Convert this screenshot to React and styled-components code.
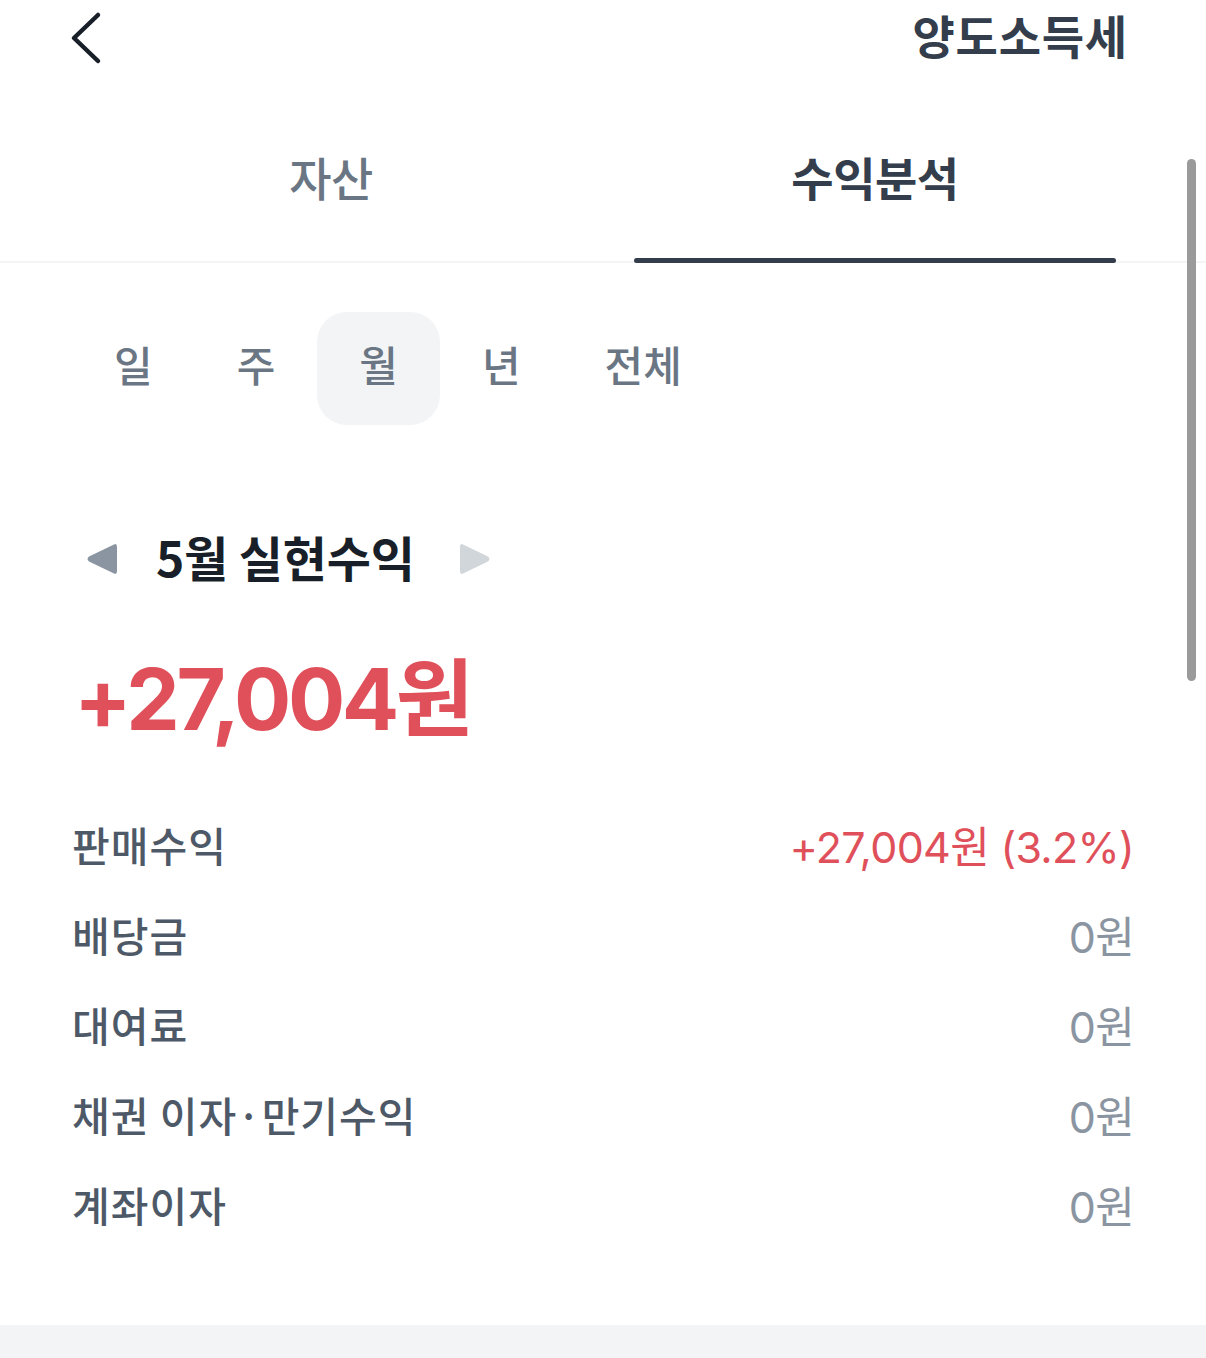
import React, { useState } from "react";
import styled, { createGlobalStyle } from "styled-components";

const GlobalStyle = createGlobalStyle`
  html, body { margin: 0; padding: 0; background: #ffffff; }
  body {
    font-family: "Noto Sans CJK KR", "Noto Sans", "Liberation Sans", sans-serif;
    -webkit-font-smoothing: antialiased;
  }
  * { box-sizing: border-box; }
`;

const Page = styled.div`
  position: relative;
  width: 1206px;
  height: 1358px;
  overflow: hidden;
  background: #ffffff;
  display: flex;
  flex-direction: column;
`;

const Header = styled.header`
  height: 74px;
  display: flex;
  align-items: center;
  justify-content: space-between;
  padding: 0 78px 0 66px;
`;

const BackButton = styled.button`
  border: 0;
  background: none;
  padding: 0;
  width: 40px;
  height: 56px;
  display: flex;
  align-items: center;
  justify-content: center;
  margin-top: 2px;
`;

const Title = styled.h1`
  margin: 0;
  font-size: 46px;
  line-height: 60px;
  font-weight: 700;
  color: #333d4b;
  letter-spacing: 0.8px;
  margin-top: -6px;
`;

const TabBar = styled.nav`
  display: flex;
  gap: 62px;
  padding: 0 90px;
  border-bottom: 2px solid #f2f4f6;
  height: 189px;
`;

const Tab = styled.button`
  position: relative;
  flex: 0 0 482px;
  display: flex;
  align-items: flex-start;
  justify-content: center;
  border: 0;
  background: none;
  padding: 72px 0 0;
  font-family: inherit;
  font-size: 46px;
  line-height: 60px;
  letter-spacing: -0.5px;
  font-weight: ${(p) => (p.$active ? 700 : 500)};
  color: ${(p) => (p.$active ? "#333d4b" : "#6b7684")};
  align-self: stretch;
  &::after {
    content: "";
    display: ${(p) => (p.$active ? "block" : "none")};
    position: absolute;
    left: 0;
    right: 0;
    bottom: -2px;
    height: 5px;
    border-radius: 3px;
    background: #333d4b;
  }
`;

const Segments = styled.div`
  display: flex;
  padding: 0 0 0 72px;
  margin-top: 49px;
`;

const Segment = styled.button`
  height: 113px;
  padding: 0 42px 10px;
  border: 0;
  border-radius: 30px;
  background: ${(p) => (p.$active ? "#f2f4f6" : "transparent")};
  font-family: inherit;
  font-size: 42px;
  font-weight: 500;
  color: #6b7684;
  letter-spacing: 0;
  display: flex;
  align-items: center;
  justify-content: center;
  min-width: 122px;
`;

const MonthRow = styled.div`
  display: flex;
  align-items: center;
  margin-top: 104px;
  padding-left: 84px;
  height: 60px;
`;

const Arrow = styled.button`
  border: 0;
  background: none;
  padding: 0;
  width: 36px;
  height: 40px;
  display: flex;
  align-items: center;
  justify-content: center;
`;

const MonthTitle = styled.h2`
  margin: -6px 42px 0 36px;
  font-size: 48px;
  line-height: 60px;
  font-weight: 700;
  color: #191f28;
  letter-spacing: -0.2px;
`;

const Amount = styled.div`
  margin-top: 56px;
  padding-left: 74px;
  font-family: "Inter", "Noto Sans CJK KR", sans-serif;
  font-size: 85px;
  line-height: 110px;
  font-weight: 700;
  letter-spacing: -3.5px;
  color: #e0505a;
`;

const List = styled.ul`
  list-style: none;
  margin: 44px 0 0;
  padding: 0 72px 0 72px;
`;

const Row = styled.li`
  height: 90px;
  display: flex;
  align-items: center;
  justify-content: space-between;
`;

const Label = styled.span`
  font-size: 41px;
  font-weight: 500;
  color: #4e5968;
  letter-spacing: 1px;
`;

const Value = styled.span`
  font-family: "Inter", "Noto Sans CJK KR", sans-serif;
  font-size: 43px;
  font-weight: 400;
  letter-spacing: -0.7px;
  color: ${(p) => (p.$positive ? "#e0505a" : "#8b95a1")};
`;

const Spacer = styled.div`
  flex: 1;
`;

const BottomBand = styled.div`
  height: 33px;
  background: #f2f4f6;
`;

const ScrollThumb = styled.div`
  position: absolute;
  right: 10px;
  top: 159px;
  width: 9px;
  height: 522px;
  border-radius: 5px;
  background: #9a9a9a;
`;

const rows = [
  { label: "판매수익", value: "+27,004원 (3.2%)", positive: true },
  { label: "배당금", value: "0원" },
  { label: "대여료", value: "0원" },
  { label: "채권 이자·만기수익", value: "0원" },
  { label: "계좌이자", value: "0원" },
];

const periods = ["일", "주", "월", "년", "전체"];

export default function App() {
  const [period, setPeriod] = useState("월");
  const [tab, setTab] = useState(1);
  return (
    <Page>
      <GlobalStyle />
      <Header>
        <BackButton aria-label="뒤로">
          <svg width="36" height="56" viewBox="0 0 36 56">
            <path
              d="M30 5 L6 28 L30 51"
              fill="none"
              stroke="#191f28"
              strokeWidth="4.5"
              strokeLinecap="round"
              strokeLinejoin="round"
            />
          </svg>
        </BackButton>
        <Title>양도소득세</Title>
      </Header>
      <TabBar>
        <Tab $active={tab === 0} onClick={() => setTab(0)}>자산</Tab>
        <Tab $active={tab === 1} onClick={() => setTab(1)}>수익분석</Tab>
      </TabBar>
      <Segments>
        {periods.map((p) => (
          <Segment key={p} $active={p === period} onClick={() => setPeriod(p)}>
            {p}
          </Segment>
        ))}
      </Segments>
      <MonthRow>
        <Arrow aria-label="이전 달">
          <svg width="34" height="36" viewBox="0 0 34 36">
            <path
              d="M29 3.5 Q32 2 32 6 L32 30 Q32 34 29 32.5 L4 20.5 Q1 18 4 15.5 Z"
              fill="#8b95a1"
            />
          </svg>
        </Arrow>
        <MonthTitle>5월 실현수익</MonthTitle>
        <Arrow aria-label="다음 달">
          <svg width="34" height="36" viewBox="0 0 34 36">
            <path
              d="M5 3.5 Q2 2 2 6 L2 30 Q2 34 5 32.5 L30 20.5 Q33 18 30 15.5 Z"
              fill="#d1d6db"
            />
          </svg>
        </Arrow>
      </MonthRow>
      <Amount>+27,004원</Amount>
      <List>
        {rows.map((r) => (
          <Row key={r.label}>
            <Label>{r.label}</Label>
            <Value $positive={r.positive}>{r.value}</Value>
          </Row>
        ))}
      </List>
      <Spacer />
      <BottomBand />
      <ScrollThumb />
    </Page>
  );
}
